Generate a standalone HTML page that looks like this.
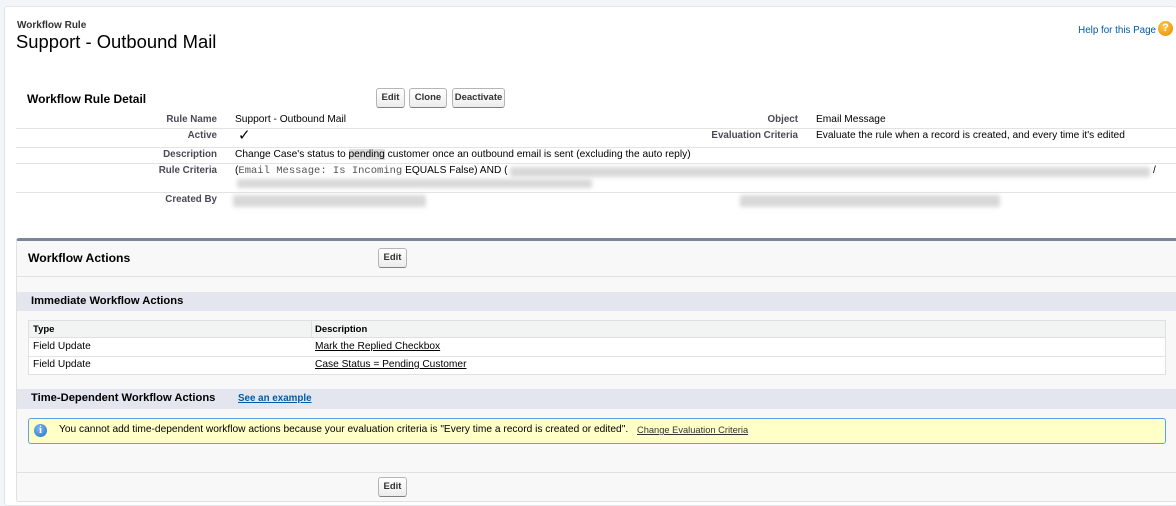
<!DOCTYPE html>
<html><head><meta charset="utf-8"><style>
*{box-sizing:border-box;margin:0;padding:0}
html,body{width:1176px;height:506px;overflow:hidden}
body{background:#f3f5f9;font-family:"Liberation Sans",Arial,sans-serif;color:#000;position:relative}
.a{position:absolute;white-space:nowrap}
.card{position:absolute;left:4px;top:6px;width:1172px;height:500px;background:#fff;border:1px solid #e2e5ea;border-right:none;border-radius:3px}
.btn{position:absolute;height:20px;border:1px solid #b5b5b5;border-bottom-color:#7f7f7f;border-radius:3px;background:linear-gradient(#fff,#ececec);font-size:9.5px;font-weight:bold;color:#333;text-align:center;line-height:18px}
.lbl{position:absolute;font-size:9.8px;font-weight:bold;color:#4a4a56;text-align:right;white-space:nowrap;line-height:1.45}
.val{position:absolute;font-size:10.2px;color:#000;white-space:nowrap;line-height:1.45}
.hr{position:absolute;height:1px;background:#e3e3e3}
.blur{position:absolute;background:#d8d8d8;filter:blur(2px);border-radius:2px}
.t{font-size:10.2px;line-height:1.45}
u{text-decoration:underline}
</style></head><body>
<div class="card"></div>
<div class="a" style="left:17px;top:20px;font-size:10px;font-weight:bold;color:#333">Workflow Rule</div>
<div class="a" style="left:16px;top:31px;font-size:18.4px;color:#000">Support - Outbound Mail</div>
<div class="a" style="right:20px;top:25px;font-size:9.8px;color:#015ba7">Help for this Page</div>
<div class="a" style="left:1158px;top:21px;width:15px;height:15px;border-radius:50%;background:radial-gradient(circle at 40% 35%,#ffc84a,#e58a00);color:#fff;font-size:11px;font-weight:bold;text-align:center;line-height:15px">?</div>

<div class="a" style="left:27px;top:92px;font-size:12px;font-weight:bold">Workflow Rule Detail</div>
<div class="btn" style="left:376px;top:88px;width:29px">Edit</div>
<div class="btn" style="left:409px;top:88px;width:38px">Clone</div>
<div class="btn" style="left:452px;top:88px;width:53px">Deactivate</div>

<div class="lbl" style="right:959px;top:113px">Rule Name</div>
<div class="val" style="left:235px;top:113px">Support - Outbound Mail</div>
<div class="lbl" style="right:378px;top:113px">Object</div>
<div class="val" style="left:816px;top:113px">Email Message</div>
<div class="hr" style="left:16px;top:128px;width:1160px"></div>
<div class="lbl" style="right:959px;top:129px">Active</div>
<div class="val" style="left:238px;top:127px;font-size:15px;line-height:1.2">✓</div>
<div class="lbl" style="right:378px;top:129px">Evaluation Criteria</div>
<div class="val" style="left:816px;top:129px">Evaluate the rule when a record is created, and every time it's edited</div>
<div class="hr" style="left:16px;top:147px;width:1160px"></div>
<div class="lbl" style="right:959px;top:148px">Description</div>
<div class="val" style="left:235px;top:148px">Change Case's status to <span style="background:#ddd">pending</span> customer once an outbound email is sent (excluding the auto reply)</div>
<div class="hr" style="left:16px;top:163px;width:1160px"></div>
<div class="lbl" style="right:959px;top:164px">Rule Criteria</div>
<div class="val" style="left:235px;top:164px">(<span style="font-family:'Liberation Mono',monospace;color:#555;font-size:10.5px">Email Message: Is Incoming</span> EQUALS False) AND (</div>
<div class="blur" style="left:510px;top:167px;width:640px;height:10px"></div>
<div class="val" style="left:1153px;top:164px">/</div>
<div class="blur" style="left:237px;top:179px;width:355px;height:9px"></div>
<div class="hr" style="left:16px;top:192px;width:1160px"></div>
<div class="lbl" style="right:959px;top:193px">Created By</div>
<div class="blur" style="left:233px;top:195px;width:193px;height:12px"></div>
<div class="blur" style="left:740px;top:195px;width:260px;height:12px"></div>

<div class="a" style="left:16px;top:238px;width:1170px;height:264px;background:#f8f8f8;border-top:3px solid #7b8597;border-left:1px solid #e0e0e0;border-bottom:1px solid #e0e0e0;border-radius:3px"></div>
<div class="a" style="left:28px;top:251px;font-size:12.2px;font-weight:bold">Workflow Actions</div>
<div class="btn" style="left:378px;top:248px;width:29px">Edit</div>
<div class="hr" style="left:17px;top:276px;width:1160px;background:#e0e0e0"></div>
<div class="a" style="left:17px;top:292px;width:1160px;height:19px;background:#e3e6ef"></div>
<div class="a" style="left:31px;top:295px;font-size:11.2px;font-weight:bold">Immediate Workflow Actions</div>
<div class="a" style="left:28px;top:320px;width:1138px;height:55px;background:#fff;border:1px solid #e0e0e0"></div>
<div class="a" style="left:29px;top:321px;width:1136px;height:17px;background:#f2f3f3;border-bottom:1px solid #e0e0e0"></div>
<div class="a" style="left:311px;top:321px;width:1px;height:17px;background:#e0e0e0"></div>
<div class="hr" style="left:29px;top:356px;width:1136px"></div>
<div class="a" style="left:33px;top:324px;font-size:9.5px;font-weight:bold">Type</div>
<div class="a" style="left:315px;top:324px;font-size:9.5px;font-weight:bold">Description</div>
<div class="a t" style="left:33px;top:340px">Field Update</div>
<div class="a t" style="left:315px;top:340px"><u>Mark the Replied Checkbox</u></div>
<div class="a t" style="left:33px;top:358px">Field Update</div>
<div class="a t" style="left:315px;top:358px"><u>Case Status = Pending Customer</u></div>
<div class="a" style="left:17px;top:389px;width:1160px;height:20px;background:#e3e6ef"></div>
<div class="a" style="left:31px;top:392px;font-size:11.2px;font-weight:bold">Time-Dependent Workflow Actions</div>
<div class="a" style="left:238px;top:393px;font-size:9.8px;font-weight:bold;color:#015ba7"><u>See an example</u></div>
<div class="a" style="left:28px;top:418px;width:1138px;height:26px;background:#ffffc8;border:1px solid #5aa2e8;border-radius:3px"></div>
<div class="a" style="left:34px;top:424px;width:13px;height:13px;border-radius:50%;background:radial-gradient(circle at 40% 35%,#7fbaf0,#1f6fcf);color:#fff;font-size:10px;font-weight:bold;text-align:center;line-height:13px;font-family:'Liberation Serif',serif">i</div>
<div class="a t" style="left:59px;top:423px">You cannot add time-dependent workflow actions because your evaluation criteria is "Every time a record is created or edited".</div>
<div class="a" style="left:637px;top:425px;font-size:9.3px;color:#333"><u>Change Evaluation Criteria</u></div>
<div class="hr" style="left:17px;top:472px;width:1160px;background:#e0e0e0"></div>
<div class="btn" style="left:378px;top:477px;width:29px">Edit</div>
</body></html>
